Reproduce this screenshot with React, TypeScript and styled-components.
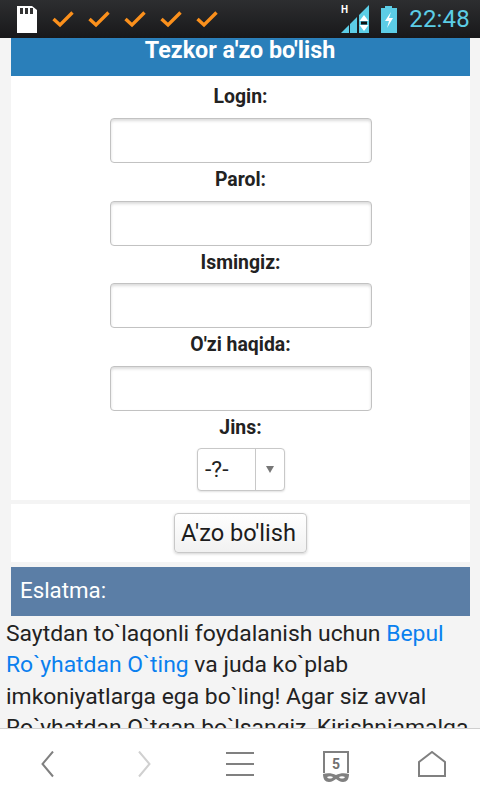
import React from "react";
import styled, { createGlobalStyle } from "styled-components";

const Global = createGlobalStyle`
  html, body { margin: 0; padding: 0; height: 100%; background: #f4f4f4; }
  body { font-family: Roboto, "Liberation Sans", sans-serif; }
  * { box-sizing: border-box; }
`;
const Screen = styled.div`
  width: 480px; height: 800px; display: flex; flex-direction: column; overflow: hidden; background: #f4f4f4;
`;
const StatusBar = styled.div`
  height: 38px; flex: none; display: flex; align-items: center; padding: 0 10px 0 17px;
  background: linear-gradient(#2d2e30, #18181a);
`;
const Checks = styled.div`
  display: flex; gap: 12px; margin-left: 14px; margin-top: -1px;
`;
const Spacer = styled.div` flex: 1; `;
const BatterySlot = styled.div` margin-left: 9px; display: flex; `;
const Clock = styled.span`
  color: #5ccde6; font-size: 24px; line-height: 38px; margin-left: 11px; letter-spacing: 0.2px;
`;
const Content = styled.div`
  flex: 1; min-height: 0; overflow: hidden; padding: 0 10px 0 11px;
`;
const Title = styled.div`
  height: 38px; background: #2a7fba; color: #fff; font-weight: 700; font-size: 23.3px;
  line-height: 24px; text-align: center; padding-right: 1px;
`;
const Form = styled.div`
  background: #fff; height: 424px; display: flex; flex-direction: column; align-items: center; padding: 0 1px;
`;
const Label = styled.div`
  height: 37.67px; padding-top: 5px; font-weight: 700; font-size: 19.4px; line-height: 24px; color: #222;
  &:first-child { height: 42px; padding-top: 9px; }
`;
const Input = styled.div`
  width: 262px; height: 45px; flex: none; border: 1px solid #c2c2c2; border-radius: 4px; background: #fff;
  box-shadow: inset 0 2px 3px rgba(0,0,0,.14);
`;
const Select = styled.div`
  width: 88px; height: 43px; flex: none; margin-top: -1px; display: flex; border: 1px solid #c8c8c8; border-radius: 4px; background: #fff;
  box-shadow: 0 1px 2px rgba(0,0,0,.12); font-size: 22.9px; color: #222;
`;
const SelectValue = styled.div`
  flex: 1; line-height: 41px; padding-left: 7.5px; border-right: 1px solid #c8c8c8;
`;
const SelectArrow = styled.div`
  width: 28px; display: flex; align-items: center; justify-content: center;
  &::after { content: ""; border-left: 4.5px solid transparent; border-right: 4.5px solid transparent; border-top: 7px solid #777; }
`;
const ButtonPanel = styled.div`
  background: #fff; margin-top: 4px; height: 58px; display: flex; justify-content: center; align-items: flex-start; padding-top: 9px;
`;
const Submit = styled.button`
  width: 133px; height: 40px; padding: 0 4px 0 0; border: 1px solid #c8c8c8; border-radius: 4px;
  background: linear-gradient(#fff, #f1f1f1); box-shadow: 0 1px 3px rgba(0,0,0,.18);
  font-family: inherit; font-size: 23.6px; color: #1c1c1c;
`;
const NoteHead = styled.div`
  margin-top: 5px; height: 49px; background: #5b7ea6; color: #fff; font-size: 22.3px; line-height: 47px; padding-left: 9px;
`;
const Body = styled.p`
  margin: 2px -10px 0 -11px; padding: 0 6px; font-size: 22.9px; line-height: 31.4px; color: #222; white-space: nowrap;
`;
const Link = styled.a` color: #0a80ef; `;
const BottomBar = styled.div`
  flex: none; height: 72px; background: #fff; border-top: 1px solid #cfcfcf;
  display: grid; grid-template-columns: repeat(5, 1fr); justify-items: center; align-items: start; padding-top: 22px;
`;

const Check = () => (
  <svg width="24" height="20" viewBox="0 0 24 20"><path d="M2.5 10l6.5 6L21.5 3.5" fill="none" stroke="#fb901c" strokeWidth="3.4" /></svg>
);
const Sd = () => (
  <svg width="20" height="28" viewBox="0 0 20 28">
    <path d="M0 1h15l5 4v23H0z" fill="#fff" />
    <path d="M3 3h3v6H3zM8 3h3v6H8zM13 3h3v6h-3z" fill="#333" />
  </svg>
);
const Signal = () => (
  <svg width="30" height="30" viewBox="0 0 30 30">
    <text x="0" y="9" fill="#fff" fontSize="10" fontWeight="700" fontFamily="Roboto">H</text>
    <path d="M0 29L8 21v8zM9 20l7-7v16H9zM18 11L28 1v28H18z" fill="#5ccde6" />
    <path d="M23 11l4.5 6h-9zM23 27l4.5-6h-9z" fill="#fff" />
    <rect x="20" y="17.5" width="6" height="3" fill="#111" />
  </svg>
);
const Battery = () => (
  <svg width="18" height="29" viewBox="0 0 18 29">
    <path d="M5 1h7v2h5v25H1V3h4z" fill="#5ccde6" />
    <path d="M11 7L5 16h4l-2 7 6-10H9z" fill="#fff" />
  </svg>
);
const Back = ({ c }: { c: string }) => (
  <svg width="16" height="28" viewBox="0 0 16 28"><path d="M13 0.5L2.5 13 13 25.5" fill="none" stroke={c} strokeWidth="2" /></svg>
);
const Forward = ({ c }: { c: string }) => (
  <svg width="16" height="28" viewBox="0 0 16 28"><path d="M3 0.5L13.5 13 3 25.5" fill="none" stroke={c} strokeWidth="2" /></svg>
);
const Menu = () => (
  <svg width="28" height="26" viewBox="0 0 28 26"><path d="M0 2h28M0 13h28M0 24h28" stroke="#808080" strokeWidth="2" /></svg>
);
const Tabs = () => (
  <svg width="28" height="32" viewBox="0 0 28 32">
    <path d="M2 22V1h24v21" fill="none" stroke="#808080" strokeWidth="2" />
    <text x="14" y="18" textAnchor="middle" fill="#707070" fontSize="14" fontWeight="700" fontFamily="Roboto">5</text>
    <path d="M1 23c4-1 9-1 13 1 4-2 9-2 13-1 0 5-2 8-6 8-3 0-5-2-7-3-2 1-4 3-7 3-4 0-6-3-6-8zM5 26c1 2 5 2 6 0-2-1-4-1-6 0zM17 26c1 2 5 2 6 0-2-1-4-1-6 0z" fill="#808080" fillRule="evenodd" />
  </svg>
);
const Home = () => (
  <svg width="28" height="28" viewBox="0 0 28 28"><path d="M1 25V11L14 1l13 10v14z" fill="none" stroke="#808080" strokeWidth="2" /></svg>
);

export default function App() {
  return (
    <Screen>
      <Global />
      <StatusBar>
        <Sd />
        <Checks>{[0, 1, 2, 3, 4].map((i) => <Check key={i} />)}</Checks>
        <Spacer />
        <Signal />
        <BatterySlot><Battery /></BatterySlot>
        <Clock>22:48</Clock>
      </StatusBar>
      <Content>
        <Title>Tezkor a'zo bo'lish</Title>
        <Form>
          <Label>Login:</Label>
          <Input />
          <Label>Parol:</Label>
          <Input />
          <Label>Ismingiz:</Label>
          <Input />
          <Label>O'zi haqida:</Label>
          <Input />
          <Label>Jins:</Label>
          <Select>
            <SelectValue>-?-</SelectValue>
            <SelectArrow />
          </Select>
        </Form>
        <ButtonPanel><Submit>A'zo bo'lish</Submit></ButtonPanel>
        <NoteHead>Eslatma:</NoteHead>
        <Body>
          Saytdan to`laqonli foydalanish uchun <Link>Bepul</Link><br />
          <Link>Ro`yhatdan O`ting</Link> va juda ko`plab<br />
          imkoniyatlarga ega bo`ling! Agar siz avval<br />
          Ro`yhatdan O`tgan bo`lsangiz, Kirishniamalga
        </Body>
      </Content>
      <BottomBar>
        <Back c="#808080" />
        <Forward c="#d0d0d0" />
        <Menu />
        <Tabs />
        <Home />
      </BottomBar>
    </Screen>
  );
}
